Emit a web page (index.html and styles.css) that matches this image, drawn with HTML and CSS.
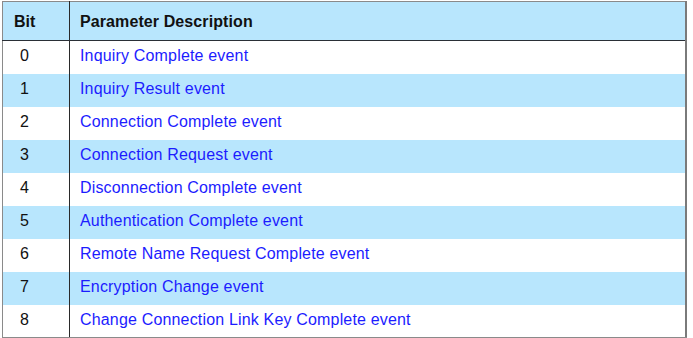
FILE: index.html
```html
<!DOCTYPE html>
<html>
<head>
<meta charset="utf-8">
<link rel="stylesheet" href="styles.css">
</head>
<body>
<table class="params">
  <thead>
    <tr class="head"><th class="bit">Bit</th><th class="desc">Parameter Description</th></tr>
  </thead>
  <tbody>
    <tr><td class="bit">0</td><td class="desc">Inquiry Complete event</td></tr>
    <tr class="alt"><td class="bit">1</td><td class="desc">Inquiry Result event</td></tr>
    <tr><td class="bit">2</td><td class="desc">Connection Complete event</td></tr>
    <tr class="alt"><td class="bit">3</td><td class="desc">Connection Request event</td></tr>
    <tr><td class="bit">4</td><td class="desc">Disconnection Complete event</td></tr>
    <tr class="alt"><td class="bit">5</td><td class="desc">Authentication Complete event</td></tr>
    <tr><td class="bit">6</td><td class="desc">Remote Name Request Complete event</td></tr>
    <tr class="alt"><td class="bit">7</td><td class="desc">Encryption Change event</td></tr>
    <tr><td class="bit">8</td><td class="desc">Change Connection Link Key Complete event</td></tr>
  </tbody>
</table>
</body>
</html>
```
FILE: styles.css
```css
html, body {
  margin: 0;
  padding: 0;
  background: #ffffff;
}
body {
  padding: 1px 0 0 2px;
  font-family: "Liberation Sans", Arial, sans-serif;
  font-size: 16px;
}
.params {
  border-collapse: collapse;
  table-layout: fixed;
  width: 685px;
  border: 1px solid #8a8a8a;
  border-right: 2px solid #7a7a7a;
  border-bottom: 2px solid #8a8a8a;
}
.params th,
.params td {
  text-align: left;
  vertical-align: middle;
  box-sizing: border-box;
}
.params .head {
  height: 39px;
  background: #b8e6fd;
}
.params .head th {
  font-weight: bold;
  color: #111111;
  border-bottom: 1px solid #2a2f36;
  padding: 2px 0 0 0;
}
.params tbody tr {
  height: 33px;
}
.params tbody tr.alt {
  background: #b8e6fd;
}
.params .bit {
  width: 67px;
  border-right: 1px solid #2a2a2a;
}
.params th.bit {
  padding-left: 11px;
}
.params td.bit {
  padding: 0 0 2px 17px;
  color: #111111;
}
.params th.desc {
  padding-left: 10px;
  letter-spacing: 0.1px;
}
.params td.desc {
  color: #1c1cff;
  padding: 0 0 2px 10px;
  letter-spacing: 0.17px;
}
```
